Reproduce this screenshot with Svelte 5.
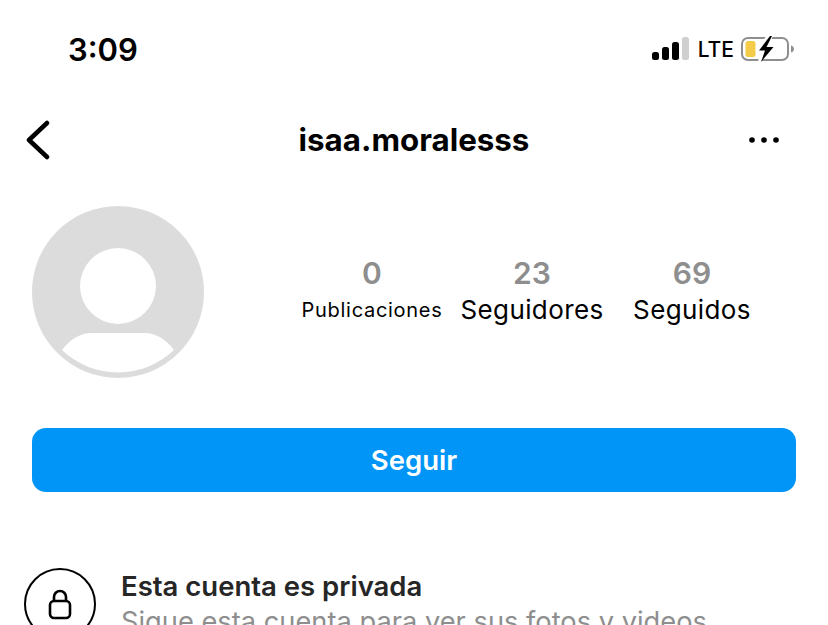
<script>
	const stats = [
		{ value: '0', label: 'Publicaciones', small: true },
		{ value: '23', label: 'Seguidores' },
		{ value: '69', label: 'Seguidos' }
	];
</script>

<div class="screen">
	<header class="status">
		<span class="time">3:09</span>
		<div class="indicators">
			<svg class="signal" width="38" height="24" viewBox="0 0 38 24" aria-hidden="true">
				<rect x="0" y="15" width="7" height="8" rx="2.5" fill="#000" />
				<rect x="10" y="10" width="7" height="13" rx="2.5" fill="#000" />
				<rect x="20" y="5" width="7" height="18" rx="2.5" fill="#000" />
				<rect x="30" y="0" width="7" height="23" rx="2.5" fill="#cfcfcf" />
			</svg>
			<span class="lte">LTE</span>
			<svg class="battery" width="54" height="28" viewBox="0 0 54 28" aria-hidden="true">
				<rect x="1" y="3" width="46" height="22" rx="6" fill="none" stroke="#8f8f8f" stroke-width="2" />
				<rect x="4.500" y="6" width="10" height="16" rx="2.500" fill="#f4cc47" />
				<path d="M50 10.500c2 .5 3 2 3 3.500s-1 3-3 3.500z" fill="#8f8f8f" />
				<path d="M27 -1 L14 16 H20 L16 30 L35 11 H27 L33 -1z" fill="#fff" />
				<path d="M29 1 L18 15.500 H24 L20 27 L32.500 12 H25.500 L31 1z" fill="#000" />
			</svg>
		</div>
	</header>

	<nav class="nav">
		<svg width="26" height="40" viewBox="0 0 26 40" aria-hidden="true">
			<path d="M23 3 L5 20 L23 37" fill="none" stroke="#000" stroke-width="4.500" stroke-linecap="round" stroke-linejoin="round" />
		</svg>
		<h1>isaa.moralesss</h1>
		<svg class="more" width="32" height="8" viewBox="0 0 32 8" aria-hidden="true">
			<circle cx="4" cy="4" r="2.800" fill="#000" />
			<circle cx="16" cy="4" r="2.800" fill="#000" />
			<circle cx="28" cy="4" r="2.800" fill="#000" />
		</svg>
	</nav>

	<section class="profile">
		<svg class="avatar" width="172" height="172" viewBox="0 0 172 172" aria-hidden="true">
			<circle cx="86" cy="86" r="86" fill="#dcdcdc" />
			<circle cx="86" cy="80" r="38" fill="#fff" />
			<path d="M30 144 Q43 127 60 127 H112 Q129 127 142 144 A81 81 0 0 1 30 144z" fill="#fff" />
		</svg>
		<div class="stats">
			{#each stats as stat}
				<div class="stat">
					<span class="value">{stat.value}</span>
					<span class="label" class:small={stat.small}>{stat.label}</span>
				</div>
			{/each}
		</div>
	</section>

	<button class="follow">Seguir</button>

	<section class="private">
		<div class="lock">
			<svg width="24" height="32" viewBox="0 0 24 32" aria-hidden="true">
				<rect x="2" y="13" width="20" height="17" rx="4" fill="none" stroke="#000" stroke-width="2.600" />
				<path d="M6 13 V9 a6 6 0 0 1 12 0 V13" fill="none" stroke="#000" stroke-width="2.600" />
			</svg>
		</div>
		<div class="copy">
			<h2>Esta cuenta es privada</h2>
			<p>Sigue esta cuenta para ver sus fotos y videos.</p>
		</div>
	</section>
</div>

<style>
	:global(body) {
		overflow: hidden;
		background: #fff;
	}

	.screen {
		width: 828px;
		height: 625px;
		overflow: hidden;
		font-family: Inter, 'Liberation Sans', sans-serif;
		color: #000;
		background: #fff;
	}

	.status {
		display: flex;
		justify-content: space-between;
		align-items: center;
		height: 100px;
		padding: 0 33px 2px 68px;
		box-sizing: border-box;
	}

	.time {
		font-size: 31px;
		font-weight: 600;
	}

	.indicators {
		display: flex;
		align-items: center;
	}

	.signal {
		margin-right: 8px;
	}

	.lte {
		font-size: 21px;
		font-weight: 500;
		margin-right: 7px;
	}

	.nav {
		display: grid;
		grid-template-columns: 1fr auto 1fr;
		align-items: center;
		height: 80px;
		padding: 0 48px 0 24px;
	}

	.more {
		justify-self: end;
	}

	h1 {
		margin: 0 0 0 24px;
		font-size: 31.300px;
		font-weight: 700;
	}

	.profile {
		display: flex;
		align-items: center;
		padding: 26px 32px 0;
	}

	.stats {
		display: grid;
		grid-template-columns: repeat(3, 160px);
		margin-left: 88px;
	}

	.stat {
		display: flex;
		flex-direction: column;
		align-items: center;
	}

	.value {
		font-size: 30px;
		font-weight: 600;
		color: #8e8e8e;
		line-height: 36px;
	}

	.label {
		font-size: 26px;
		line-height: 38px;
		letter-spacing: 0.4px;
		white-space: nowrap;
	}

	.label.small {
		font-size: 20px;
		letter-spacing: 0.7px;
	}

	.follow {
		display: block;
		width: 764px;
		height: 64px;
		margin: 50px 32px 0;
		border: none;
		border-radius: 14px;
		background: #0095f6;
		color: #fff;
		font: 600 27.500px Inter, 'Liberation Sans', sans-serif;
	}

	.private {
		display: flex;
		align-items: flex-start;
		gap: 25px;
		padding: 76px 24px 0;
	}

	.lock {
		flex: none;
		display: flex;
		align-items: center;
		justify-content: center;
		width: 72px;
		height: 72px;
		box-sizing: border-box;
		border: 2.500px solid #000;
		border-radius: 50%;
	}

	h2 {
		margin: 0;
		font-size: 27.500px;
		font-weight: 600;
		line-height: 36px;
		color: #262626;
	}

	p {
		margin: 3px 0 0;
		font-size: 27.250px;
		line-height: 30px;
		color: #8e8e8e;
		white-space: nowrap;
	}
</style>
